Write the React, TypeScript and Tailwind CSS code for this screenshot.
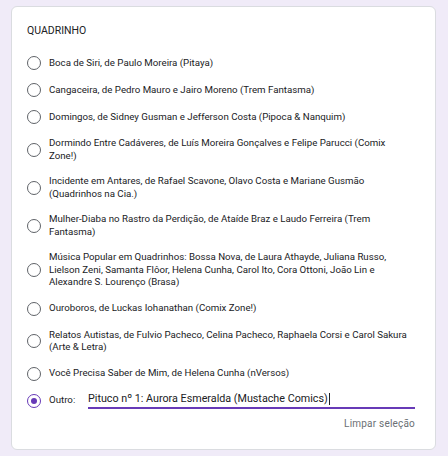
import React from "react";

const options: string[] = [
  "Boca de Siri, de Paulo Moreira (Pitaya)",
  "Cangaceira, de Pedro Mauro e Jairo Moreno (Trem Fantasma)",
  "Domingos, de Sidney Gusman e Jefferson Costa (Pipoca & Nanquim)",
  "Dormindo Entre Cadáveres, de Luís Moreira Gonçalves e Felipe Parucci (Comix Zone!)",
  "Incidente em Antares, de Rafael Scavone, Olavo Costa e Mariane Gusmão (Quadrinhos na Cia.)",
  "Mulher-Diaba no Rastro da Perdição, de Ataíde Braz e Laudo Ferreira (Trem Fantasma)",
  "Música Popular em Quadrinhos: Bossa Nova, de Laura Athayde, Juliana Russo, Lielson Zeni, Samanta Flôor, Helena Cunha, Carol Ito, Cora Ottoni, João Lin e Alexandre S. Lourenço (Brasa)",
  "Ouroboros, de Luckas Iohanathan (Comix Zone!)",
  "Relatos Autistas, de Fulvio Pacheco, Celina Pacheco, Raphaela Corsi e Carol Sakura (Arte & Letra)",
  "Você Precisa Saber de Mim, de Helena Cunha (nVersos)",
];

function Radio({ checked = false }: { checked?: boolean }) {
  return (
    <span
      className={
        checked
          ? "flex h-[14px] w-[14px] shrink-0 items-center justify-center rounded-full border-[1.5px] border-[#673ab7]"
          : "flex h-[14px] w-[14px] shrink-0 items-center justify-center rounded-full border-[1.5px] border-[#5f6368]"
      }
    >
      {checked && <span className="h-[6px] w-[6px] rounded-full bg-[#673ab7]" />}
    </span>
  );
}

export default function App() {
  return (
    <div className="h-[456px] w-[448px] bg-[#f0ebf8] pl-[11px] pt-[6px] font-['Roboto',sans-serif]">
      <div className="flex h-[444px] w-[425px] flex-col rounded-[6px] border border-[#dadce0] bg-white pl-[15px] pr-[20px] pt-[17px]">
        <div className="text-[10.5px] leading-[14px] text-[#202124]">QUADRINHO</div>

        <div className="mt-[18px] flex flex-col gap-[13px]">
          {options.map((o) => (
            <div key={o} className="flex items-center gap-[8px]">
              <Radio />
              <span className="text-[9.7px] leading-[12.5px] text-[#202124]">{o}</span>
            </div>
          ))}

          {/* outro: field is taller than the row, it hangs over */}
          <div className="flex h-[14px] items-center">
            <Radio checked />
            <span className="ml-[8px] w-[39px] shrink-0 text-[9.7px] leading-[12.5px] text-[#202124]">Outro:</span>
            <div className="flex-1 border-b-2 border-[#673ab7] pb-[1px] text-[10.75px] leading-[14px] text-[#202124]">
              Pituco nº 1: Aurora Esmeralda (Mustache Comics)
              <span className="ml-[1px] inline-block h-[12px] w-px bg-[#202124] align-middle" />
            </div>
          </div>
        </div>

        <div className="mt-[9px] text-right text-[10px] leading-[14px] tracking-[0.2px] text-[#6b6f74]">
          Limpar seleção
        </div>
      </div>
    </div>
  );
}
